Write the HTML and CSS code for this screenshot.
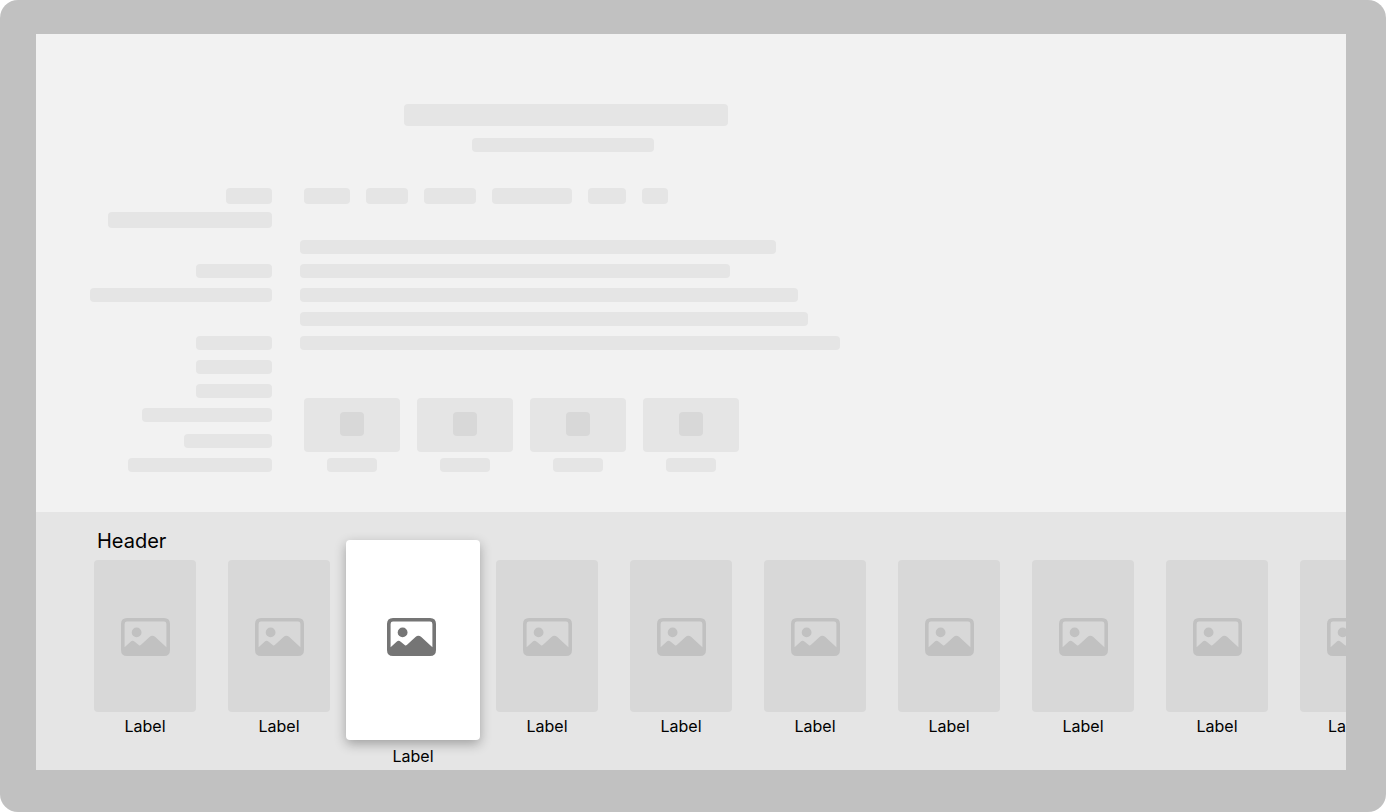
FILE: index.html
```html
<!DOCTYPE html>
<html lang="en">
  <head>
    <meta charset="utf-8">
    <title>Content shelf</title>
    <link rel="stylesheet" href="styles.css">
  </head>
  <body>
    <svg class="defs" aria-hidden="true">
      <symbol id="picture" viewBox="0 0 50 38">
        <path fill="currentColor" fill-rule="evenodd" d="M7 0H44Q50 0 50 6V32Q50 38 44 38H7Q1 38 1 32V6Q1 0 7 0ZM7 3.6Q4.6 3.6 4.6 6V29.2L10.6 23.7Q12.6 22 14.7 23.7L19 27.3Q19.9 27.8 20.8 27L29.5 19.1Q32.4 16.6 35.3 19.1L46.4 29.2V6Q46.4 3.6 44 3.6Z"/>
        <circle fill="currentColor" cx="16.6" cy="14.4" r="4.9"/>
      </symbol>
    </svg>

    <div class="tv">
      <main class="screen">
        <section class="product">
          <div class="facts" id="facts"></div>
          <div class="details">
            <div class="bar title"></div>
            <div class="bar subtitle"></div>
            <div class="tags" id="tags"></div>
            <div class="text" id="text"></div>
            <div class="actions" id="actions"></div>
          </div>
        </section>

        <section class="shelf">
          <h2>Header</h2>
          <ul id="items"></ul>
        </section>
      </main>
    </div>

  <script>
      const facts = [
        { size: 'tall', widths: [46, 164] },
        { size: '', widths: [76, 182] },
        { size: '', widths: [76, 76, 76, 130] },
        { size: '', widths: [88, 144] },
      ];
      const tags = [46, 42, 52, 80, 38, 26];
      const text = [476, 430, 498, 508, 540];
      const actionCount = 4;
      const itemCount = 10;
      const focusedItem = 2;

      const bar = (width, size = '') => `<div class="bar ${ size }" style="width: ${ width }px"></div>`;

      document.querySelector('#facts').innerHTML = facts.map( group => `
        <div class="group">${ group.widths.map( width => bar(width, group.size) ).join('') }</div>
      `).join('');

      document.querySelector('#tags').innerHTML = tags.map( width => bar(width, 'tall') ).join('');

      document.querySelector('#text').innerHTML = text.map( width => bar(width) ).join('');

      document.querySelector('#actions').innerHTML = Array.from({ length: actionCount }, () => `
        <div class="action">
          <div class="card"><div class="glyph"></div></div>
          <div class="bar caption"></div>
        </div>
      `).join('');

      document.querySelector('#items').innerHTML = Array.from({ length: itemCount }, (_, i) => `
        <li>
          <button type="button" class="item ${ i === focusedItem ? 'focused' : '' }">
            <span class="poster"><svg aria-hidden="true"><use href="#picture"/></svg></span>
            <span class="label">Label</span>
          </button>
        </li>
      `).join('');
  </script>

  </body>
</html>
```
FILE: styles.css
```css
* {
  box-sizing: border-box;
}

body {
  margin: 0;
  background: white;
  color: black;
  font-family: Inter, "Liberation Sans", sans-serif;
}

.defs {
  display: none;
}

.tv {
  display: flex;
  min-height: 100vh;
  padding: 34px 40px 42px 36px;
  border-radius: 18px;
  background: #c1c1c1;
}

.screen {
  display: flex;
  flex-direction: column;
  flex: 1;
  min-width: 0;
  background: #f2f2f2;
}

/* placeholder page */

.product {
  display: grid;
  grid-template-columns: 182px 1fr;
  gap: 28px;
  flex: 1;
  padding: 70px 54px 40px;
}

.bar {
  height: 14px;
  border-radius: 4px;
  background: #e5e5e5;
}

.bar.tall {
  height: 16px;
}

.facts {
  padding-top: 84px;
}

.group {
  display: flex;
  flex-direction: column;
  align-items: flex-end;
  gap: 10px;
}

.group:nth-child(1) {
  gap: 8px;
  margin-bottom: 36px;
}

.group:nth-child(2) {
  margin-bottom: 34px;
}

.group:nth-child(3) {
  margin-bottom: 12px;
}

.title {
  width: 324px;
  height: 22px;
  margin-left: 104px;
}

.subtitle {
  width: 182px;
  margin: 12px 0 36px 172px;
}

.tags {
  display: flex;
  gap: 16px;
  margin-left: 4px;
}

.text {
  display: flex;
  flex-direction: column;
  gap: 10px;
  margin: 36px 0 48px;
}

.actions {
  display: flex;
  gap: 17px;
  margin-left: 4px;
}

.card {
  width: 96px;
  height: 54px;
  padding-top: 14px;
  border-radius: 4px;
  background: #e5e5e5;
}

.glyph {
  width: 24px;
  height: 24px;
  margin: 0 auto;
  border-radius: 4px;
  background: #d8d8d8;
}

.caption {
  width: 50px;
  margin: 6px auto 0;
}

/* shelf */

.shelf {
  overflow: hidden;
  padding: 17px 0 4px 58px;
  background: #e5e5e5;
}

.shelf h2 {
  margin: 0 0 7px 3px;
  font-size: 20px;
  font-weight: 400;
  line-height: 24px;
}

.shelf ul {
  display: flex;
  gap: 32px;
  margin: 0;
  padding: 0;
  list-style-type: none;
}

.shelf li {
  flex: 0 0 102px;
}

.item {
  display: block;
  width: 100%;
  padding: 0;
  border: 0;
  background: none;
  color: inherit;
  font: inherit;
  cursor: pointer;
}

.poster {
  display: flex;
  align-items: center;
  justify-content: center;
  height: 152px;
  padding-top: 2px;
  border-radius: 4px;
  background: #d8d8d8;
  color: #c1c1c1;
}

.poster svg {
  width: 50px;
  height: 38px;
}

.label {
  display: block;
  margin-top: 4px;
  font-size: 16px;
  line-height: 20px;
}

.shelf li:last-child .label {
  padding-left: 28px;
  text-align: left;
}

.focused .poster {
  height: 200px;
  margin: -20px -16px 0;
  padding: 0 4px 6px 0;
  background: white;
  color: #757575;
  box-shadow: 0 4px 12px rgba(0, 0, 0, 0.3);
}

.focused .label {
  margin-top: 6px;
}
```
